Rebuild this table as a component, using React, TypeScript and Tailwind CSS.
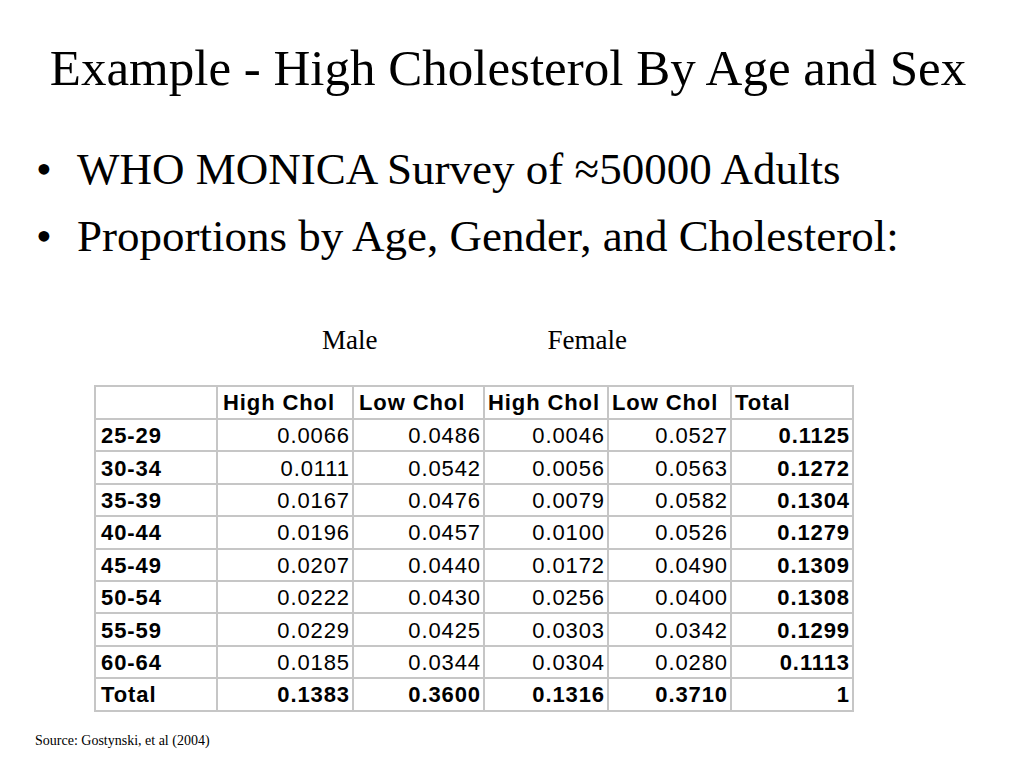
import React from "react";

const rows: [string, string, string, string, string, string][] = [
  ["25-29", "0.0066", "0.0486", "0.0046", "0.0527", "0.1125"],
  ["30-34", "0.0111", "0.0542", "0.0056", "0.0563", "0.1272"],
  ["35-39", "0.0167", "0.0476", "0.0079", "0.0582", "0.1304"],
  ["40-44", "0.0196", "0.0457", "0.0100", "0.0526", "0.1279"],
  ["45-49", "0.0207", "0.0440", "0.0172", "0.0490", "0.1309"],
  ["50-54", "0.0222", "0.0430", "0.0256", "0.0400", "0.1308"],
  ["55-59", "0.0229", "0.0425", "0.0303", "0.0342", "0.1299"],
  ["60-64", "0.0185", "0.0344", "0.0304", "0.0280", "0.1113"],
];

const serif = "font-['Liberation_Serif','Times_New_Roman',serif]";
const cell = "border-2 border-[#c6c6c6] p-0 align-middle leading-[24px]";

export default function App() {
  return (
    <div className={`w-[1024px] h-[768px] bg-white text-black flex flex-col ${serif}`}>
      <h1 className="mt-[43px] text-[51px] leading-[51px] text-center pr-[8px] font-normal">
        Example - High Cholesterol By Age and Sex
      </h1>
      <ul className="mt-[42px] pl-[36px] text-[45px] leading-[67px]">
        <li className="flex">
          <span className="w-[41px]">•</span>
          <span>WHO MONICA Survey of ≈50000 Adults</span>
        </li>
        <li className="flex">
          <span className="w-[41px]">•</span>
          <span>Proportions by Age, Gender, and Cholesterol:</span>
        </li>
      </ul>
      <div className="mt-[57px] flex pl-[322px] text-[27px] leading-[27px]">
        <span>Male</span>
        <span className="ml-[170px]">Female</span>
      </div>
      <div className="mt-[31px] pl-[94px]">
        <table className="border-collapse table-fixed font-['Liberation_Sans',Arial,sans-serif] text-[22px] leading-[24px] tracking-[0.9px]">
          <colgroup>
            <col className="w-[122px]" />
            <col className="w-[136px]" />
            <col className="w-[131px]" />
            <col className="w-[124px]" />
            <col className="w-[123px]" />
            <col className="w-[122px]" />
          </colgroup>
          <thead>
            <tr className="h-[33px]">
              <th className={cell}></th>
              <th className={`${cell} text-left font-bold pl-[5px] pt-[1px]`}>High Chol</th>
              <th className={`${cell} text-left font-bold pl-[5px] pt-[1px]`}>Low Chol</th>
              <th className={`${cell} text-left font-bold pl-[3px] pt-[1px] whitespace-nowrap`}>High Chol</th>
              <th className={`${cell} text-left font-bold pl-[3px] pt-[1px] whitespace-nowrap`}>Low Chol</th>
              <th className={`${cell} text-left font-bold pl-[3px] pt-[1px]`}>Total</th>
            </tr>
          </thead>
          <tbody>
            {rows.map((r) => (
              <tr key={r[0]} className="h-[32.4px]">
                <td className={`${cell} font-bold pl-[5px] pt-[2px]`}>{r[0]}</td>
                <td className={`${cell} text-right pr-[2px] pt-[2px]`}>{r[1]}</td>
                <td className={`${cell} text-right pr-[2px] pt-[2px]`}>{r[2]}</td>
                <td className={`${cell} text-right pr-[2px] pt-[2px]`}>{r[3]}</td>
                <td className={`${cell} text-right pr-[2px] pt-[2px]`}>{r[4]}</td>
                <td className={`${cell} text-right font-bold pr-[2px] pt-[2px]`}>{r[5]}</td>
              </tr>
            ))}
            <tr className="h-[32.4px]">
              <td className={`${cell} font-bold pl-[5px] pt-[2px]`}>Total</td>
              <td className={`${cell} text-right font-bold pr-[2px] pt-[2px]`}>0.1383</td>
              <td className={`${cell} text-right font-bold pr-[2px] pt-[2px]`}>0.3600</td>
              <td className={`${cell} text-right font-bold pr-[2px] pt-[2px]`}>0.1316</td>
              <td className={`${cell} text-right font-bold pr-[2px] pt-[2px]`}>0.3710</td>
              <td className={`${cell} text-right font-bold pr-[2px] pt-[2px]`}>1</td>
            </tr>
          </tbody>
        </table>
      </div>
      <div className="mt-[21px] pl-[35px] text-[14px] leading-[16px]">
        Source: Gostynski, et al (2004)
      </div>
    </div>
  );
}
